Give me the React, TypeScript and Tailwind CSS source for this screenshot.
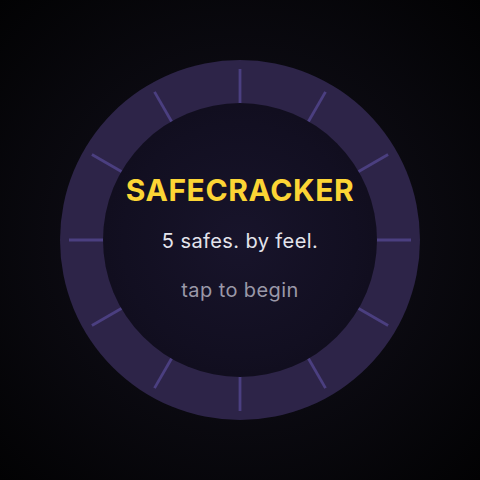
import React from "react";

export default function App() {
  const ticks = Array.from({ length: 12 }, (_, i) => i * 30);
  return (
    <div
      className="w-[480px] h-[480px] flex items-center justify-center bg-[radial-gradient(circle_at_center,#16121f_0%,#0b0a11_50%,#020203_100%)]"
      style={{ fontFamily: "Inter, 'Noto Sans', sans-serif" }}
    >
      <div className="relative w-[360px] h-[360px] rounded-full bg-[#2d2448] flex items-center justify-center">
        <svg className="absolute inset-0" width="360" height="360" viewBox="0 0 360 360">
          {ticks.map((a) => {
            const r = (a * Math.PI) / 180;
            const x1 = 180 + Math.sin(r) * 136;
            const y1 = 180 - Math.cos(r) * 136;
            const x2 = 180 + Math.sin(r) * 171;
            const y2 = 180 - Math.cos(r) * 171;
            return (
              <line key={a} x1={x1} y1={y1} x2={x2} y2={y2} stroke="#4b3f80" strokeWidth="2.8" />
            );
          })}
        </svg>
        <div className="relative w-[274px] h-[274px] rounded-full bg-[radial-gradient(circle_at_center,#18142b_0%,#120f21_60%,#0e0b18_100%)] flex flex-col items-center justify-center pb-[6px]">
          <div className="text-[30px] leading-[36px] font-bold tracking-[0.02em] text-[#fcd535]">SAFECRACKER</div>
          <div className="mt-[20px] text-[20px] leading-[26px] tracking-[0.02em] text-[#e4e4ec]">5 safes. by feel.</div>
          <div className="mt-[23px] text-[20px] leading-[26px] tracking-[0.02em] text-[#9a98a8]">tap to begin</div>
        </div>
      </div>
    </div>
  );
}
